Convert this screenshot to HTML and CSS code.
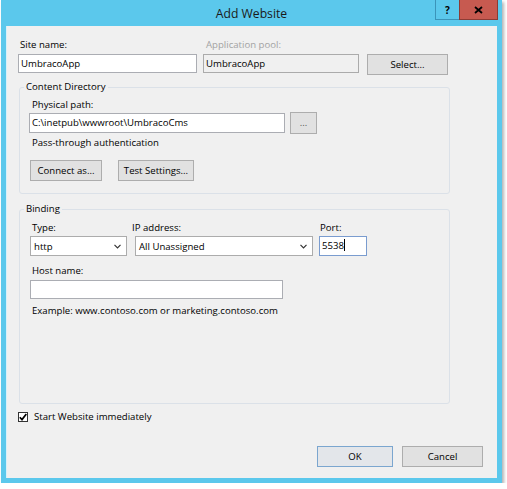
FILE: index.html
```html
<!DOCTYPE html>
<html>
<head>
<meta charset="utf-8">
<link rel="stylesheet" href="styles.css">
</head>
<body>
<div class="window">
  <div class="titlebar">
    <div></div>
    <div class="title">Add Website</div>
    <div class="caption-btns">
      <div class="cbtn help">?</div>
      <div class="cbtn close"><svg width="9" height="8" viewBox="0 0 9 8"><path d="M1 1 L8 7 M8 1 L1 7" stroke="#000" stroke-width="1.8" fill="none"/></svg></div>
    </div>
  </div>
  <div class="client">
    <div class="row1">
      <div class="col site">
        <div class="lbl">Site name:</div>
        <div class="input">UmbracoApp</div>
      </div>
      <div class="col pool">
        <div class="lbl disabled">Application pool:</div>
        <div class="input readonly">UmbracoApp</div>
      </div>
      <button class="btn select-btn">Select...</button>
    </div>

    <fieldset class="group dir-group">
      <legend>Content Directory</legend>
      <div class="group-body dir-body">
        <div class="lbl">Physical path:</div>
        <div class="path-row">
          <div class="input path-input">C:\inetpub\wwwroot\UmbracoCms</div>
          <button class="btn browse-btn">...</button>
        </div>
        <div class="lbl pass">Pass-through authentication</div>
        <div class="btn-row">
          <button class="btn connect-btn">Connect as...</button>
          <button class="btn test-btn">Test Settings...</button>
        </div>
      </div>
    </fieldset>

    <fieldset class="group bind-group">
      <legend>Binding</legend>
      <div class="group-body bind-body">
        <div class="bind-row">
          <div class="col type-col">
            <div class="lbl">Type:</div>
            <div class="combo type-combo"><span>http</span><svg class="arrow" width="7" height="5" viewBox="0 0 7 5"><path d="M0.5 0.8 L3.5 3.8 L6.5 0.8" stroke="#333" stroke-width="1.2" fill="none"/></svg></div>
          </div>
          <div class="col ip-col">
            <div class="lbl ip-lbl">IP address:</div>
            <div class="combo ip-combo"><span>All Unassigned</span><svg class="arrow" width="7" height="5" viewBox="0 0 7 5"><path d="M0.5 0.8 L3.5 3.8 L6.5 0.8" stroke="#333" stroke-width="1.2" fill="none"/></svg></div>
          </div>
          <div class="col port-col">
            <div class="lbl port-lbl">Port:</div>
            <div class="input port-input focused">5538<span class="caret"></span></div>
          </div>
        </div>
        <div class="lbl host-lbl">Host name:</div>
        <div class="input host-input"></div>
        <div class="lbl example">Example: www.contoso.com or marketing.contoso.com</div>
      </div>
    </fieldset>

    <div class="check-row">
      <div class="checkbox"><svg width="8" height="8" viewBox="0 0 8 8"><path d="M0.8 4.2 L3 6.6 L7.3 1" stroke="#000" stroke-width="1.7" fill="none"/></svg></div>
      <div class="check-lbl">Start Website immediately</div>
    </div>

    <div class="dialog-btns">
      <button class="btn ok-btn">OK</button>
      <button class="btn cancel-btn">Cancel</button>
    </div>
  </div>
</div>
</body>
</html>
```
FILE: styles.css
```css
body {
  margin: 0;
  background: #ffffff;
  font-family: "Open Sans", "Noto Sans", sans-serif;
  font-size: 9.6px;
  color: #000;
}

.window {
  margin-left: 1px;
  width: 501px;
  height: 483px;
  background: #5bc8ec;
  display: flex;
  flex-direction: column;
  box-shadow: 2px 2px 3px rgba(0, 0, 0, 0.3);
}

.titlebar {
  height: 26px;
  flex: none;
  display: grid;
  grid-template-columns: 1fr auto 1fr;
  align-items: start;
}

.title {
  font-size: 12.2px;
  line-height: 16px;
  margin-top: 6px;
  color: #1a1a1a;
}

.caption-btns {
  justify-self: end;
  display: flex;
  margin-right: 4px;
}

.cbtn {
  height: 20px;
  box-sizing: border-box;
  display: flex;
  align-items: center;
  justify-content: center;
  font-weight: bold;
  font-size: 10px;
}

.help {
  width: 24px;
  border: 1px solid #3b94b9;
  border-top: none;
  border-right: none;
}

.close {
  width: 39px;
  background: #c75a50;
  border: 1px solid #8c3c35;
  border-top: none;
}

.client {
  flex: 1;
  margin: 0 5px 5px 5px;
  border-left: 1px solid #d6f1fb;
  background: #f0f0f0;
  display: flex;
  flex-direction: column;
  align-items: flex-start;
  padding: 11px 0 11px 11px;
}

.lbl {
  line-height: 16px;
  padding-left: 2px;
  white-space: nowrap;
}

.lbl.disabled {
  color: #a3a3a3;
  padding-left: 3px;
}

.input {
  box-sizing: border-box;
  height: 19px;
  line-height: 17px;
  background: #fff;
  border: 1px solid #abadb3;
  padding: 0 2px;
  white-space: nowrap;
}

.input.readonly {
  background: #f0f0f0;
  border-color: #ababab;
}

.input.focused {
  border-color: #7a9ccf;
}

.caret {
  display: inline-block;
  width: 1px;
  height: 12px;
  background: #000;
  vertical-align: -2px;
}

.row1 {
  display: flex;
  align-items: flex-start;
}

.col {
  display: flex;
  flex-direction: column;
}

.row1 .input {
  margin-top: 1px;
}

.site {
  width: 179px;
}

.pool {
  width: 156px;
  margin-left: 6px;
}

.btn {
  box-sizing: border-box;
  font: inherit;
  color: #000;
  background: #e1e1e1;
  border: 1px solid #adadad;
  border-radius: 0;
  padding: 0;
  height: 21px;
  line-height: 19px;
}

.select-btn {
  width: 81px;
  margin-left: 8px;
  margin-top: 17px;
}

.group {
  box-sizing: border-box;
  width: 431px;
  margin: 0 0 0 1px;
  padding: 0;
  border: 1px solid #dbe1e8;
  border-radius: 3px;
  min-width: 0;
}

.group legend {
  margin-left: 4px;
  padding: 0 2px;
  line-height: 16px;
}

.dir-group {
  margin-top: 4px;
}

.dir-body {
  padding: 2px 0 12px 9px;
}

.dir-body .lbl {
  padding-left: 3px;
}

.path-row {
  display: flex;
  align-items: flex-start;
}

.path-input {
  width: 256px;
  height: 20px;
  line-height: 18px;
}

.browse-btn {
  width: 27px;
  height: 22px;
  margin-left: 5px;
  margin-top: -1px;
  line-height: 18px;
  color: #555;
}

.pass {
  margin-top: 1px;
}

.btn-row {
  display: flex;
  margin-top: 9px;
  margin-left: 1px;
}

.connect-btn {
  width: 72px;
}

.test-btn {
  width: 76px;
  margin-left: 16px;
}

.bind-group {
  margin-top: 7px;
}

.bind-body {
  padding: 3px 0 84px 10px;
}

.bind-row {
  display: flex;
  align-items: flex-start;
}

.combo {
  box-sizing: border-box;
  height: 20px;
  background: #fff;
  border: 1px solid #acacac;
  display: flex;
  align-items: center;
  justify-content: space-between;
  padding: 0 5px 0 3px;
  white-space: nowrap;
}

.arrow {
  flex: none;
}

.type-col {
  width: 97px;
}

.ip-col {
  width: 178px;
  margin-left: 8px;
}

.ip-lbl {
  padding-left: 0;
  margin-left: -3px;
}

.port-col {
  width: 48px;
  margin-left: 6px;
}

.port-lbl {
  padding-left: 1px;
}

.port-input {
  height: 20px;
  line-height: 18px;
  padding-left: 2px;
}

.host-lbl {
  margin-top: 7px;
}

.host-input {
  width: 253px;
  margin-top: 1px;
}

.example {
  margin-top: 4px;
}

.check-row {
  display: flex;
  align-items: flex-start;
  margin-top: 5px;
}

.checkbox {
  box-sizing: border-box;
  width: 10px;
  height: 10px;
  margin-top: 3px;
  border: 1px solid #333;
  background: #fff;
  display: flex;
  align-items: center;
  justify-content: center;
}

.check-lbl {
  line-height: 16px;
  margin-left: 6px;
}

.dialog-btns {
  margin-top: auto;
  align-self: flex-end;
  display: flex;
  margin-right: 14px;
}

.ok-btn {
  width: 76px;
  background: #e3e6ea;
  border-color: #7ba6cf;
}

.cancel-btn {
  width: 81px;
  margin-left: 9px;
}
```
